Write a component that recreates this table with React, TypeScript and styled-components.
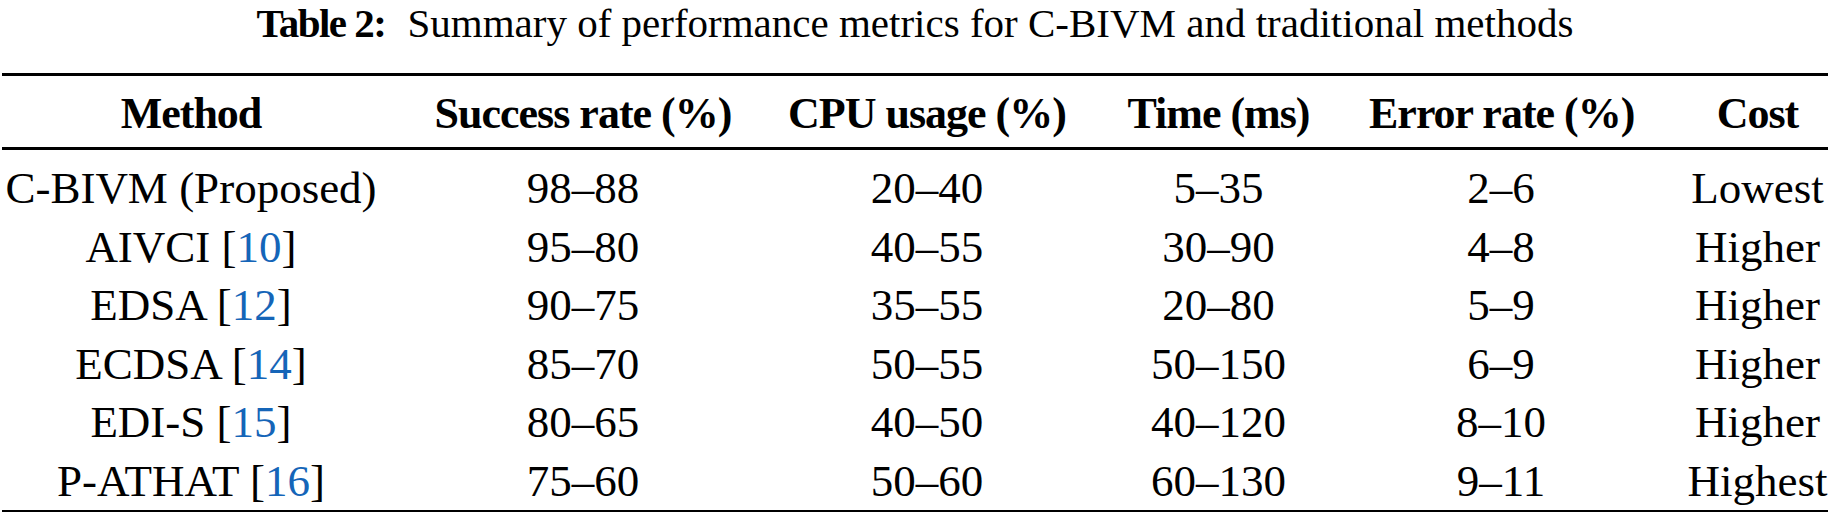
import styled, { createGlobalStyle } from "styled-components";

type MethodRow = {
  name: string;
  cite?: number;
  success: string;
  cpu: string;
  time: string;
  error: string;
  cost: string;
};

const rows: MethodRow[] = [
  { name: "C-BIVM (Proposed)", success: "98–88", cpu: "20–40", time: "5–35", error: "2–6", cost: "Lowest" },
  { name: "AIVCI", cite: 10, success: "95–80", cpu: "40–55", time: "30–90", error: "4–8", cost: "Higher" },
  { name: "EDSA", cite: 12, success: "90–75", cpu: "35–55", time: "20–80", error: "5–9", cost: "Higher" },
  { name: "ECDSA", cite: 14, success: "85–70", cpu: "50–55", time: "50–150", error: "6–9", cost: "Higher" },
  { name: "EDI-S", cite: 15, success: "80–65", cpu: "40–50", time: "40–120", error: "8–10", cost: "Higher" },
  { name: "P-ATHAT", cite: 16, success: "75–60", cpu: "50–60", time: "60–130", error: "9–11", cost: "Highest" },
];

const headers = ["Method", "Success rate (%)", "CPU usage (%)", "Time (ms)", "Error rate (%)", "Cost"];

function App() {
  return (
    <>
      <GlobalStyle />
      <StyledFigure>
        <StyledCaption>
          <StyledCaptionLabel>Table 2:</StyledCaptionLabel>Summary of performance metrics for C-BIVM and
          traditional methods
        </StyledCaption>
        <StyledTable>
          <StyledHeaderRow>
            {headers.map((h) => (
              <StyledCell key={h}>{h}</StyledCell>
            ))}
          </StyledHeaderRow>
          <StyledBody>
            {rows.map((r) => (
              <StyledRow key={r.name}>
                <StyledCell>
                  {r.name}
                  {r.cite !== undefined && (
                    <>
                      {" "}[<StyledCite>{r.cite}</StyledCite>]
                    </>
                  )}
                </StyledCell>
                <StyledCell>{r.success}</StyledCell>
                <StyledCell>{r.cpu}</StyledCell>
                <StyledCell>{r.time}</StyledCell>
                <StyledCell>{r.error}</StyledCell>
                <StyledCell>{r.cost}</StyledCell>
              </StyledRow>
            ))}
          </StyledBody>
        </StyledTable>
      </StyledFigure>
    </>
  );
}

export default App;

const GlobalStyle = createGlobalStyle`
  html, body {
    margin: 0;
    padding: 0;
    background: #ffffff;
  }

  body {
    font-family: "Liberation Serif", "Times New Roman", serif;
    color: #000000;
  }
`;

const StyledFigure = styled.div`
  display: flex;
  flex-direction: column;
  width: 1826px;
  margin: 0 4px 0 2px;
`;

const StyledCaption = styled.div`
  font-size: 41px;
  line-height: 46px;
  text-align: center;
  white-space: nowrap;
  margin-bottom: 27px;
`;

const StyledCaptionLabel = styled.span`
  font-weight: 700;
  letter-spacing: -1.5px;
  margin-right: 22px;
`;

const StyledTable = styled.div`
  display: flex;
  flex-direction: column;
  border-top: 3px solid #000;
  border-bottom: 2px solid #000;
`;

const StyledRow = styled.div`
  display: grid;
  grid-template-columns: 378px 298px 282px 193px 264px 141px;
  column-gap: 54px;
  font-size: 45px;
  line-height: 58.5px;
`;

const StyledHeaderRow = styled(StyledRow)`
  font-size: 44px;
  font-weight: 700;
  letter-spacing: -1px;
  line-height: 49px;
  padding: 13px 0 9px;
  border-bottom: 3px solid #000;
`;

const StyledBody = styled.div`
  display: flex;
  flex-direction: column;
  padding-top: 9px;
`;

const StyledCell = styled.div`
  text-align: center;
  white-space: nowrap;
`;

const StyledCite = styled.span`
  color: #1565b8;
`;
